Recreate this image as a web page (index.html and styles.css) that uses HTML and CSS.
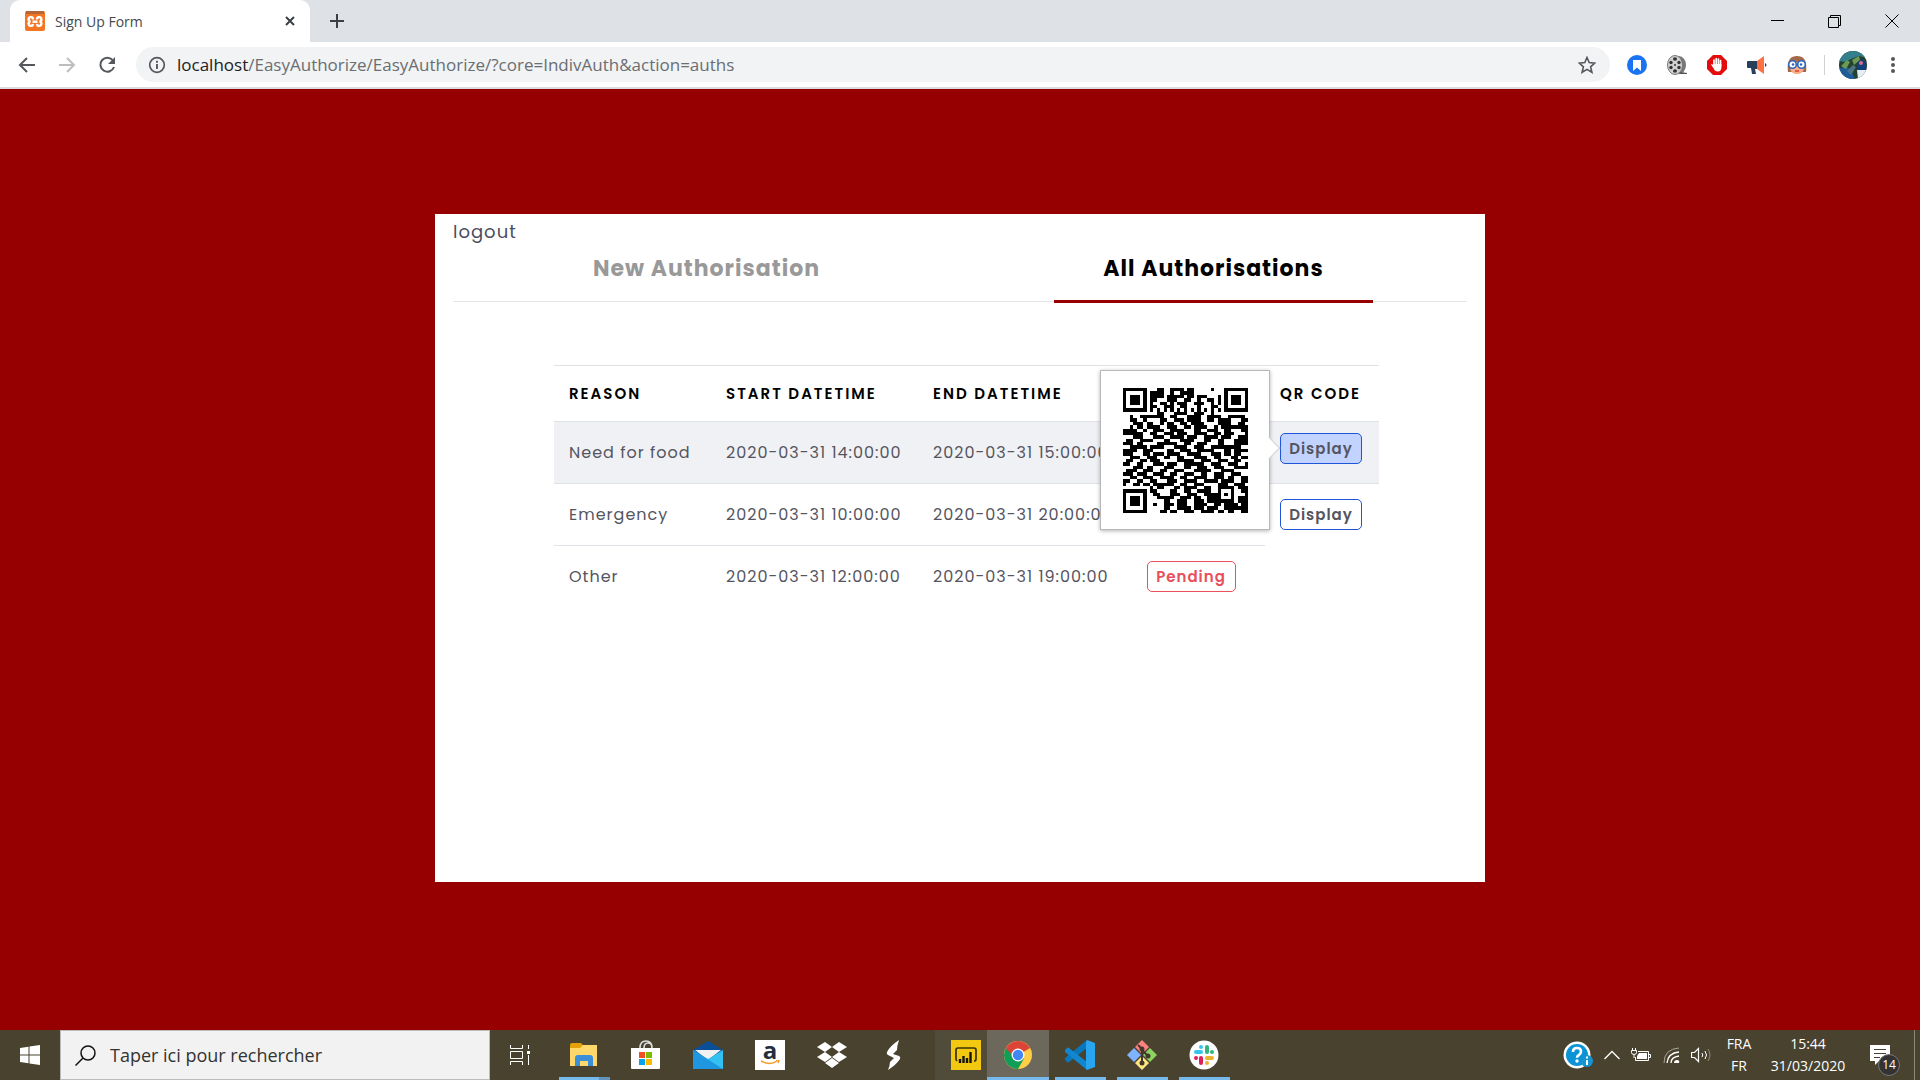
FILE: index.html
```html
<!DOCTYPE html>
<html lang="en">
<head>
  <meta charset="UTF-8" />
  <meta name="viewport" content="width=device-width, initial-scale=1.0"/>
  <title>Sign Up Form</title>
  <link rel="stylesheet" href="styles.css">
</head>
<body>
  <header class="browser">
    <div class="tab-strip">
      <div class="tab">
        <svg class="favicon" viewBox="0 0 20 20"><rect width="20" height="20" rx="2" fill="#f37623"/><rect x="1" width="18" height="3" fill="#b9653a"/><g fill="none" stroke="#fff" stroke-width="2.400"><path d="M8 8.500A2.200 2.200 0 1 0 5.500 10.500 2.200 2.200 0 1 0 8 13M12 8.500a2.200 2.200 0 1 1 2.500 2 2.200 2.200 0 1 1-2.500 2.500M7.500 10.700h5"/></g></svg>
        <span class="tab-title">Sign Up Form</span>
        <button class="tab-close" aria-label="Close tab"><svg width="10" height="10" viewBox="0 0 10 10"><path d="M1 1l8 8M9 1l-8 8" stroke="#3c4043" stroke-width="2"/></svg></button>
      </div>
      <button class="tab-new" aria-label="New tab"><svg width="16" height="16" viewBox="0 0 16 16"><path d="M8 1v14M1 8h14" stroke="#3c4043" stroke-width="2"/></svg></button>
      <div class="window-buttons">
        <button aria-label="Minimize"><svg width="14" height="14" viewBox="0 0 14 14"><path d="M0 6.500h13" stroke="#000"/></svg></button>
        <button aria-label="Restore"><svg width="14" height="14" viewBox="0 0 14 14"><path d="M.5 3.500h10v10H.5zM2.500 3V1.500h10v10H11" fill="none" stroke="#000"/></svg></button>
        <button aria-label="Close"><svg width="14" height="14" viewBox="0 0 14 14"><path d="M.5 .5l13 13M13.500 .5l-13 13" stroke="#000"/></svg></button>
      </div>
    </div>
    <div class="toolbar">
      <button class="nav-button" aria-label="Back"><svg width="18" height="18" viewBox="0 0 18 18"><path d="M17 9H2M9 2L2 9l7 7" fill="none" stroke="#55585c" stroke-width="2"/></svg></button>
      <button class="nav-button" aria-label="Forward"><svg width="18" height="18" viewBox="0 0 18 18"><path d="M1 9h15M9 2l7 7-7 7" fill="none" stroke="#bcbec0" stroke-width="2"/></svg></button>
      <button class="nav-button" aria-label="Reload"><svg width="18" height="18" viewBox="0 0 18 18"><path d="M15 4.500A7 7 0 1 0 16 11" fill="none" stroke="#55585c" stroke-width="2"/><path d="M17 1v7h-7z" fill="#55585c"/></svg></button>
      <div class="omnibox">
        <svg width="18" height="18" viewBox="0 0 18 18"><circle cx="9" cy="9" r="7.300" fill="none" stroke="#55585c" stroke-width="1.700"/><path d="M9 8v5M9 4.700v2" stroke="#55585c" stroke-width="1.900"/></svg>
        <label for="url">localhost</label>
        <input type="text" id="url" value="/EasyAuthorize/EasyAuthorize/?core=IndivAuth&amp;action=auths" />
        <button class="star" aria-label="Bookmark"><svg width="18" height="18" viewBox="0 0 18 18"><path d="M9 1.500l2.200 5.100 5.600.5-4.200 3.700 1.300 5.500L9 13.400l-4.900 2.900 1.300-5.500L1.200 7.100l5.600-.5z" fill="none" stroke="#55585c" stroke-width="1.600"/></svg></button>
      </div>
      <div class="extensions">
        <button aria-label="Bookmarks"><svg width="20" height="20" viewBox="0 0 20 20"><circle cx="10" cy="10" r="10" fill="#1a73f0"/><path d="M6 5h8v11l-4-3.500L6 16z" fill="#fff"/></svg></button>
        <button aria-label="Film reel"><svg width="20" height="20" viewBox="0 0 20 20"><ellipse cx="12" cy="10" rx="7" ry="9" fill="#777"/><path d="M14 17l6 1v1h-8z" fill="#555"/><ellipse cx="8" cy="10" rx="7.500" ry="9.500" fill="#d0d0d0" stroke="#777"/><g fill="#333"><ellipse cx="8" cy="4" rx="2" ry="1.700"/><circle cx="4" cy="7.500" r="1.700"/><circle cx="12" cy="7.500" r="1.700"/><circle cx="4" cy="12.500" r="1.700"/><circle cx="12" cy="12.500" r="1.700"/><ellipse cx="8" cy="16" rx="2" ry="1.700"/><circle cx="8" cy="10" r="1"/></g></svg></button>
        <button aria-label="Ad blocker"><svg width="20" height="20" viewBox="0 0 20 20"><path d="M6 0h8l6 6v8l-6 6H6l-6-6V6z" fill="#e40d0d"/><path d="M7 11V5M9.200 10V3.500M11.400 10V4M13.500 11V5.500" stroke="#fff" stroke-width="1.700" stroke-linecap="round"/><path d="M6.200 9h8.200v3.500c0 2.500-1.500 4-3.400 4-2.500 0-3.500-1-4.500-3.200L4 9.500l1-.6 1.500 1.600z" fill="#fff"/></svg></button>
        <button aria-label="Announcements"><svg width="20" height="20" viewBox="0 0 20 20"><path d="M0 7q0-1 1-1h9v8H8l1 5H5L4 13H1q-1 0-1-1z" fill="#273f5b"/><path d="M10 6l7-5v18l-7-5z" fill="#ff7043"/><path d="M18 8q3 2 0 4z" fill="#273f5b"/></svg></button>
        <button aria-label="Reader"><svg width="20" height="20" viewBox="0 0 20 20"><path d="M1 17Q-1 1 10 1t9 16z" fill="#a4694a"/><path d="M3 7h14v6q-1 6-7 6t-7-6z" fill="#f9ae87"/><path d="M8 16h4" stroke="#d8403b" stroke-width="1.500"/><circle cx="5.500" cy="9.500" r="3.800" fill="#fff" stroke="#2a66bd" stroke-width="1.600"/><circle cx="14.500" cy="9.500" r="3.800" fill="#fff" stroke="#2a66bd" stroke-width="1.600"/><circle cx="6" cy="9.500" r="1.300" fill="#2a66bd"/><circle cx="14" cy="9.500" r="1.300" fill="#2a66bd"/></svg></button>
      </div>
      <button class="profile" aria-label="Profile"><svg width="28" height="28" viewBox="0 0 28 28"><clipPath id="face"><circle cx="14" cy="14" r="14"/></clipPath><g clip-path="url(#face)"><rect width="28" height="28" fill="#24402f"/><path d="M0 0h28v7L20 5l-8 3-6 3-6-1z" fill="#347f8c"/><path d="M0 18l7-3 5 4 4 9H0z" fill="#1e5c9a"/><path d="M2 15l6-6 3 2-4 7zM13 9l7-4 1 4-6 5z" fill="#6a9a54"/><path d="M8 20l6-6 3 2-5 8z" fill="#4b7580"/><path d="M18 12q4-6 8-2l2 9-9 1z" fill="#123f80"/><circle cx="22" cy="12" r="2" fill="#df6c8b"/><path d="M18 19h9v9h-8z" fill="#e6edf2"/></g></svg></button>
      <button class="menu" aria-label="Menu"><svg width="6" height="18" viewBox="0 0 6 18"><g fill="#55585c"><circle cx="3" cy="3" r="2"/><circle cx="3" cy="9" r="2"/><circle cx="3" cy="15" r="2"/></g></svg></button>
    </div>
  </header>

  <main class="page">
    <section class="card">
      <a class="logout" href="#">logout</a>
      <nav class="tabs">
        <a href="#new">New Authorisation</a>
        <a href="#all" class="active">All Authorisations</a>
      </nav>
      <table class="auth-table">
        <thead>
          <tr>
            <th class="col-reason">Reason</th>
            <th class="col-start">Start datetime</th>
            <th class="col-end">End datetime</th>
            <th class="col-status"></th>
            <th class="col-qr">QR code</th>
          </tr>
        </thead>
        <tbody>
          <tr class="selected">
            <td>Need for food</td>
            <td>2020-03-31 14:00:00</td>
            <td>2020-03-31 15:00:00</td>
            <td></td>
            <td class="qr-cell">
              <div class="qr-holder">
                <button class="btn btn-display pressed">Display</button>
                <div class="popover">
                  <svg id="qr" viewBox="0 0 37 37"></svg>
                </div>
              </div>
            </td>
          </tr>
          <tr>
            <td>Emergency</td>
            <td>2020-03-31 10:00:00</td>
            <td>2020-03-31 20:00:00</td>
            <td></td>
            <td><button class="btn btn-display">Display</button></td>
          </tr>
          <tr>
            <td>Other</td>
            <td>2020-03-31 12:00:00</td>
            <td>2020-03-31 19:00:00</td>
            <td class="status-cell"><button class="btn btn-pending">Pending</button></td>
          </tr>
        </tbody>
      </table>
    </section>
  </main>

  <footer class="taskbar">
    <button class="start" aria-label="Start"><svg width="20" height="20" viewBox="0 0 20 20"><path d="M0 3l8.500-1.200v7.700H0zM9.500 1.600L20 0v9.500H9.500zM0 10.500h8.500v7.700L0 17zM9.500 10.500H20V20L9.500 18.400z" fill="#fff"/></svg></button>
    <div class="search">
      <svg width="21" height="21" viewBox="0 0 21 21"><circle cx="13" cy="8" r="7" fill="none" stroke="#111" stroke-width="1.500"/><path d="M8 13l-7.500 7.500" stroke="#111" stroke-width="1.500"/></svg>
      <input type="text" aria-label="Taper ici pour rechercher" placeholder="Taper ici pour rechercher" />
    </div>
    <button class="task-view" aria-label="Task view"><svg width="20" height="20" viewBox="0 0 20 20"><path d="M.5 0v3.500h12V0M.5 6.500h12v7H.5zM.5 20v-3.500h12V20M18.500 0v4M18.500 10v10" fill="none" stroke="#fff"/><path d="M17 6h3v3h-3z" fill="#fff"/></svg></button>
    <div class="apps">
      <button class="open group" aria-label="Explorer"><svg width="30" height="30" viewBox="0 0 30 30"><path d="M1 5q0-2 2-2h9l3 3h13v20H1z" fill="#e3a008"/><path d="M1 8h10l3-3h14v21H1z" fill="#ffd76a"/><path d="M6 26V18q0-3 3-3h12q3 0 3 3v8h-5v-5h-8v5z" fill="#3a8fd8"/></svg></button>
      <button aria-label="Store"><svg width="30" height="30" viewBox="0 0 30 30"><path d="M9 8q0-7 6-7t6 7M13 8q0-5 4-5t4 5" fill="none" stroke="#ddd" stroke-width="1.600"/><path d="M0 8h29v20q0 1-1 1H1q-1 0-1-1z" fill="#fff"/><path d="M8 12h6v6H8z" fill="#f25022"/><path d="M15 12h6v6h-6z" fill="#7fba00"/><path d="M8 19h6v6H8z" fill="#00a4ef"/><path d="M15 19h6v6h-6z" fill="#ffb900"/></svg></button>
      <button aria-label="Mail"><svg width="30" height="30" viewBox="0 0 30 30"><path d="M0 10L15 1l15 9v4H0z" fill="#0a4f96"/><path d="M2 10h26L15 20z" fill="#f1f1f1"/><path d="M0 10l15 9 15-9v19H0z" fill="#34c1f2"/><path d="M0 10l30 19H0z" fill="#1e96e0"/></svg></button>
      <button aria-label="Amazon"><span class="amazon">a<svg width="20" height="5" viewBox="0 0 20 5"><path d="M1 1q9 5 16 0M16 0l3 0-1 3" fill="none" stroke="#f39a2b" stroke-width="1.500"/></svg></span></button>
      <button aria-label="Dropbox"><svg width="30" height="30" viewBox="0 0 30 30"><path d="M8 2l7 5-7 5-8-5zM22 2l8 5-8 5-7-5zM8 12l7 5-7 5-8-5zM22 12l8 5-8 5-7-5zM15 18l7 5-7 5-7-5z" fill="#fff"/></svg></button>
      <button aria-label="Streamlabs"><svg width="30" height="30" viewBox="0 0 30 30"><path d="M20 0q-2 6-2 10l-4 4 6 2q2 1 1 3-4 6-12 11 2-5 2-8l4-4-6-3q-2-1-1-3 3-6 12-12z" fill="#fff"/></svg></button>
      <button class="power-bi" aria-label="Power BI"><svg width="30" height="30" viewBox="0 0 30 30"><path d="M0 0h30v30H0z" fill="#f2c811"/><path d="M6 21q-1-1-1-2v-9q0-2 2-2h16q2 0 2 2v9q0 2-2 2" fill="none" stroke="#3b330b" stroke-width="1.700"/><path d="M9 23v-4M12.500 23v-7M16 23v-5M19.500 23V12" stroke="#171408" stroke-width="2.400"/></svg></button>
      <button class="open current" aria-label="Chrome"><svg width="28" height="28" viewBox="0 0 28 28"><circle cx="14" cy="14" r="14" fill="#ffcd46"/><path d="M14 14L1.900 7A14 14 0 0 0 14 28l6-10.500z" fill="#109d58"/><path d="M14 14H8L1.900 7a14 14 0 0 1 24.200 0z" fill="#db4437"/><circle cx="14" cy="14" r="6.500" fill="#fff"/><circle cx="14" cy="14" r="5.200" fill="#4285f4"/></svg></button>
      <button class="open" aria-label="VS Code"><svg width="30" height="30" viewBox="0 0 30 30"><path d="M22 0v8L4 22q-1 1-2 0l-2-2q-1-1 0-2z" fill="#0a77bd"/><path d="M22 30v-8L4 8Q3 7 2 8l-2 2q-1 1 0 2z" fill="#1287cf"/><path d="M22 0l8 3v24l-8 3q-1-1-1-2V2z" fill="#29a4ef"/></svg></button>
      <button class="open" aria-label="Git"><svg width="30" height="30" viewBox="0 0 30 30"><path d="M15 0l7 7-7 7-7-7z" fill="#ff8080"/><path d="M7 8l7 7-7 7-7-7z" fill="#80b3ff"/><path d="M23 8l7 7-7 7-7-7z" fill="#8dd35f"/><path d="M15 16l7 7-7 7-7-7z" fill="#ffe680"/><path d="M11 5l4 4v14M15 10l6 6" fill="none" stroke="#40382c" stroke-width="2"/><circle cx="15" cy="9" r="2.500" fill="#40382c"/><circle cx="21" cy="16" r="2.500" fill="#40382c"/><circle cx="15" cy="23" r="2.500" fill="#40382c"/></svg></button>
      <button class="open" aria-label="Slack"><svg width="30" height="30" viewBox="0 0 30 30"><circle cx="15" cy="15" r="14.500" fill="#fff"/><g stroke-width="4" stroke-linecap="round"><path d="M7 12h5M12 7v0" stroke="#36c5f0"/><path d="M18 7v5M23 12v0" stroke="#2eb67d"/><path d="M18 18h5M18 23v0" stroke="#ecb22e"/><path d="M12 18v5M7 18v0" stroke="#e01e5a"/></g></svg></button>
    </div>
    <div class="tray">
      <button aria-label="Help"><svg width="30" height="28" viewBox="0 0 30 28"><circle cx="14" cy="14" r="13.500" fill="#fff"/><circle cx="14" cy="14" r="11" fill="#0a94d6"/><path d="M10 11q0-4 4-4t4 3.500q0 2-2 3.300t-2 3" fill="none" stroke="#fff" stroke-width="2.600"/><circle cx="14" cy="20" r="1.700" fill="#fff"/><circle cx="24" cy="20" r="6" fill="#1594d0"/><path d="M24 19v5M24 15.500v2" stroke="#fff" stroke-width="2"/></svg></button>
      <button aria-label="Hidden icons"><svg width="16" height="10" viewBox="0 0 16 10"><path d="M.5 9L8 1.500 15.500 9" fill="none" stroke="#fff" stroke-width="1.300"/></svg></button>
      <button aria-label="Battery"><svg width="20" height="14" viewBox="0 0 20 14"><path d="M7 3.500h10.500v9h-13V9M17.500 6.500h2v3h-2M1.500 0v2M4.500 0v2M.5 2.500h5v2q0 2-2.500 2t-2.500-2zM3 7v3" fill="none" stroke="#fff"/><path d="M8 5h8v6H6V8z" fill="#fff"/></svg></button>
      <button aria-label="Network"><svg width="18" height="18" viewBox="0 0 18 18"><path d="M2 17Q2 3 17 2" fill="none" stroke="#aaa799"/><path d="M5 17Q6 7 17 6M9 17q0-6 8-7" fill="none" stroke="#fff" stroke-width="1.300"/><path d="M12 17q0-3 3-3t2 3z" fill="#fff"/></svg></button>
      <button aria-label="Volume"><svg width="21" height="16" viewBox="0 0 21 16"><path d="M.5 5.500h3l4-4v13l-4-4h-3z" fill="none" stroke="#fff" stroke-width="1.200"/><path d="M11 6q1.500 2 0 4M14 4q3 4 0 8" fill="none" stroke="#fff"/><path d="M17 2q4 6 0 12" fill="none" stroke="#8e8b7b"/></svg></button>
      <button class="language">FRA<br>FR</button>
      <button class="clock">15:44<br>31/03/2020</button>
      <button class="notifications" aria-label="Notifications"><svg width="20" height="20" viewBox="0 0 20 20"><path d="M0 0h20v16H9l-4 4v-4H0z" fill="#fff"/><path d="M4 4.500h12M4 8.500h12M4 12.500h6" stroke="#48422f"/></svg><span class="badge">14</span></button>
    </div>
  </footer>

  <script src="script.js"></script>
</body>
</html>
```
FILE: styles.css
```css
* {
  box-sizing: border-box;
}

body {
  margin: 0;
  min-height: 100vh;
  display: flex;
  flex-direction: column;
  font-family: 'Poppins', 'Inter', sans-serif;
  background-color: #960000;
}

button {
  border: none;
  background: none;
  padding: 0;
  font-family: inherit;
  color: inherit;
  cursor: pointer;
}

svg {
  display: block;
}

input {
  border: none;
  background: transparent;
  outline: none;
  padding: 0;
}

/* Browser bar */
.browser {
  font-family: 'Segoe UI', 'Open Sans', sans-serif;
  background-color: #fff;
  border-bottom: 2px solid #dadce0;
}

.tab-strip {
  display: flex;
  align-items: center;
  height: 42px;
  padding-left: 10px;
  background-color: #dee1e6;
}

.tab {
  display: flex;
  align-items: center;
  width: 300px;
  height: 42px;
  padding: 0 15px;
  border-radius: 10px 10px 0 0;
  background-color: #fff;
}

.favicon {
  width: 20px;
  height: 20px;
}

.tab-title {
  flex: 1;
  padding-left: 10px;
  font-size: 14px;
  color: #45494d;
}

.tab-new {
  margin-left: 19px;
}

.window-buttons {
  display: flex;
  margin-left: auto;
  height: 36px;
}

.window-buttons button {
  display: flex;
  align-items: center;
  justify-content: center;
  width: 57px;
}

.toolbar {
  display: flex;
  align-items: center;
  height: 45px;
  padding: 0 24px 0 7px;
}

.nav-button {
  display: flex;
  justify-content: center;
  width: 40px;
}

.omnibox {
  flex: 1;
  display: flex;
  align-items: center;
  height: 35px;
  margin-left: 9px;
  padding: 0 14px 0 12px;
  border-radius: 18px;
  background-color: #f1f3f4;
  font-size: 17px;
}

.omnibox label {
  padding-left: 11px;
  color: #202124;
}

.omnibox input {
  flex: 1;
  font: inherit;
  color: #6a6e72;
}

.extensions {
  display: flex;
  gap: 20px;
  padding: 0 17px;
  border-right: 1px solid #cfd1d4;
}

.profile {
  margin-left: 14px;
}

.menu {
  margin-left: 23px;
}

/* Page */
.page {
  flex: 1;
  padding: 125px 20px;
}

.card {
  max-width: 1050px;
  min-height: 668px;
  margin: 0 auto;
  padding: 4px 18px;
  background-color: #fff;
  color: #55555f;
}

.logout {
  display: block;
  font-size: 18px;
  line-height: 28px;
  letter-spacing: 1px;
  color: #4b4d5e;
  text-decoration: none;
}

.tabs {
  display: grid;
  grid-template-columns: 1fr 1fr;
  justify-items: center;
  border-bottom: 1px solid #e6e6e8;
}

.tabs a {
  width: 63%;
  margin-bottom: -2px;
  padding: 7px 0 15px;
  border-bottom: 3px solid transparent;
  text-align: center;
  font-size: 22px;
  font-weight: 700;
  line-height: 32px;
  letter-spacing: 1px;
  color: #999;
  text-decoration: none;
}

.tabs .active {
  color: #000;
  border-color: #960000;
}

.auth-table {
  width: 825px;
  max-width: 100%;
  margin: 63px 0 0 101px;
  border-collapse: collapse;
  table-layout: fixed;
  text-align: left;
  white-space: nowrap;
}

.auth-table th,
.auth-table td {
  height: 62px;
  padding: 0 15px;
  border-top: 1px solid #dee2e6;
  font-size: 16px;
  letter-spacing: 1px;
}

.auth-table th {
  height: 56px;
  font-size: 15px;
  font-weight: 600;
  letter-spacing: 2px;
  text-transform: uppercase;
  color: #000;
}

.col-reason {
  width: 157px;
}

.col-start {
  width: 207px;
}

.col-end {
  width: 199px;
}

.col-status {
  width: 148px;
}

.col-qr {
  width: 114px;
}

.selected {
  background-color: #f0f1f4;
}

.auth-table .status-cell {
  text-align: center;
}

.auth-table .qr-cell {
  padding-top: 11px;
  vertical-align: top;
}

.qr-holder {
  position: relative;
}

.btn {
  display: inline-block;
  width: 82px;
  height: 31px;
  border: 1px solid #1f55d8;
  border-radius: 5px;
  font-size: 15px;
  font-weight: 600;
  letter-spacing: 1px;
  color: #55555f;
}

.pressed {
  background-color: #c2d3ff;
}

.btn-pending {
  width: 89px;
  border-color: #e8505b;
  color: #e8505b;
}

.popover {
  position: absolute;
  top: -63px;
  right: calc(100% + 10px);
  width: 170px;
  height: 160px;
  padding: 17px 22px;
  border: 1px solid #b8b8b8;
  background-color: #fff;
  box-shadow: 0 1px 4px rgba(0, 0, 0, 0.3);
}

.popover::after {
  content: "";
  position: absolute;
  top: 69px;
  right: -8px;
  width: 15px;
  height: 15px;
  border-top: 1px solid #ccc;
  border-right: 1px solid #ccc;
  background-color: #fff;
  transform: rotate(45deg);
}

#qr {
  width: 125px;
  height: 125px;
}

/* Taskbar */
.taskbar {
  display: flex;
  align-items: stretch;
  height: 50px;
  background-color: #48422f;
  color: #fff;
  font-family: 'Segoe UI', 'Open Sans', sans-serif;
}

.taskbar button {
  display: flex;
  align-items: center;
  justify-content: center;
}

.start {
  width: 60px;
}

.search {
  display: flex;
  align-items: center;
  width: 430px;
  padding-left: 14px;
  border: 1px solid #bbb;
  background-color: #f2f2f2;
}

.search input {
  flex: 1;
  padding-left: 14px;
  font-family: inherit;
  font-size: 18px;
}

.search input::placeholder {
  color: #333;
}

.task-view {
  width: 60px;
  margin-right: 3px;
}

.apps {
  display: flex;
}

.apps button {
  width: 62px;
  border-bottom: 3px solid transparent;
  padding-top: 3px;
}

.apps .open {
  background: linear-gradient(#76b9ed, #76b9ed) no-repeat center bottom / 51px 3px;
  background-origin: border-box;
}

.apps .group {
  background-image: linear-gradient(90deg, #76b9ed 40px, #6193bd 40px);
}

.apps .power-bi {
  width: 52px;
  margin-left: 10px;
  justify-content: flex-end;
  padding-right: 6px;
  background-color: #504c39;
}

.apps .current {
  background-size: 62px 3px;
  background-color: #6c685b;
}

.amazon {
  display: flex;
  flex-direction: column;
  align-items: center;
  width: 30px;
  height: 30px;
  background-color: #fff;
  color: #232f3e;
  font-size: 24px;
  font-weight: 700;
  line-height: 20px;
}

.tray {
  display: flex;
  align-items: center;
  margin-left: auto;
  padding-right: 5px;
  gap: 11px;
}

.tray .language,
.tray .clock {
  display: block;
  font-size: 14px;
  line-height: 22px;
}

.tray .language {
  width: 32px;
}

.tray .clock {
  width: 84px;
}

.tray .notifications {
  position: relative;
  width: 54px;
  height: 50px;
  padding-right: 16px;
  border-right: 1px solid #8b877a;
}

.badge {
  position: absolute;
  left: 17px;
  top: 24px;
  width: 22px;
  height: 22px;
  border: 1px solid #777;
  border-radius: 50%;
  background-color: #333;
  font-size: 12px;
  line-height: 20px;
}
```
FILE: script.js
```js
// QR code modules, one string per row
const rows = [
  "1111111000110011110110000010001111111",
  "1000001011110010011110000000001000001",
  "1011101011110111110110111000101011101",
  "1011101011000111001100100110101011101",
  "1011101010011010111001110010101011101",
  "1000001011001110011000100011001000001",
  "1111111010101010101010101010101111111",
  "0000000000110001111001110010000000000",
  "0010011111110011000111100111100111110",
  "0011001000011001110111100110111100011",
  "0001110110010110011011110000111100110",
  "0010110111100111001101111001011111111",
  "1111001001110011110001100111001100011",
  "1111110011001110111001111001101110001",
  "0001110001110011110111001111011100111",
  "0110011110001100011110001100110001111",
  "1110110000111111001100111000110001111",
  "0011111011110001111001110011111111100",
  "1111001110000110011100111110001101111",
  "1110001101110111100111100011101101100",
  "0011100111001100110001111001100011011",
  "0110011011100000111110011100111001100",
  "1100110001110111001111110011100111001",
  "0001110110001110001100111001110001111",
  "0111001110011001110001111100011110000",
  "1110111001110011001110011001110011100",
  "0011001110011110011001111001110110011",
  "1100110011000111001111001111011110011",
  "1001101101111110011001110000111001110",
  "0000000010110001101111001100111110111",
  "1111111011000011001100111100100010011",
  "1000001001100011100111001111101010001",
  "1011101000111110011101100111100010111",
  "1011101000001100111001110111111110111",
  "1011101001001110111001111001101111011",
  "1000001000001100111101110111001111111",
  "1111111000011011001110011110110110011"
];

let d = "";
rows.forEach((row, y) => {
  // one rectangle per run of dark modules
  for (const run of row.matchAll(/1+/g)) {
    d += `M${run.index} ${y}h${run[0].length}v1h-${run[0].length}z`;
  }
});

const path = document.createElementNS("http://www.w3.org/2000/svg", "path");
path.setAttribute("d", d);
path.setAttribute("shape-rendering", "crispEdges");
document.getElementById("qr").appendChild(path);
```
